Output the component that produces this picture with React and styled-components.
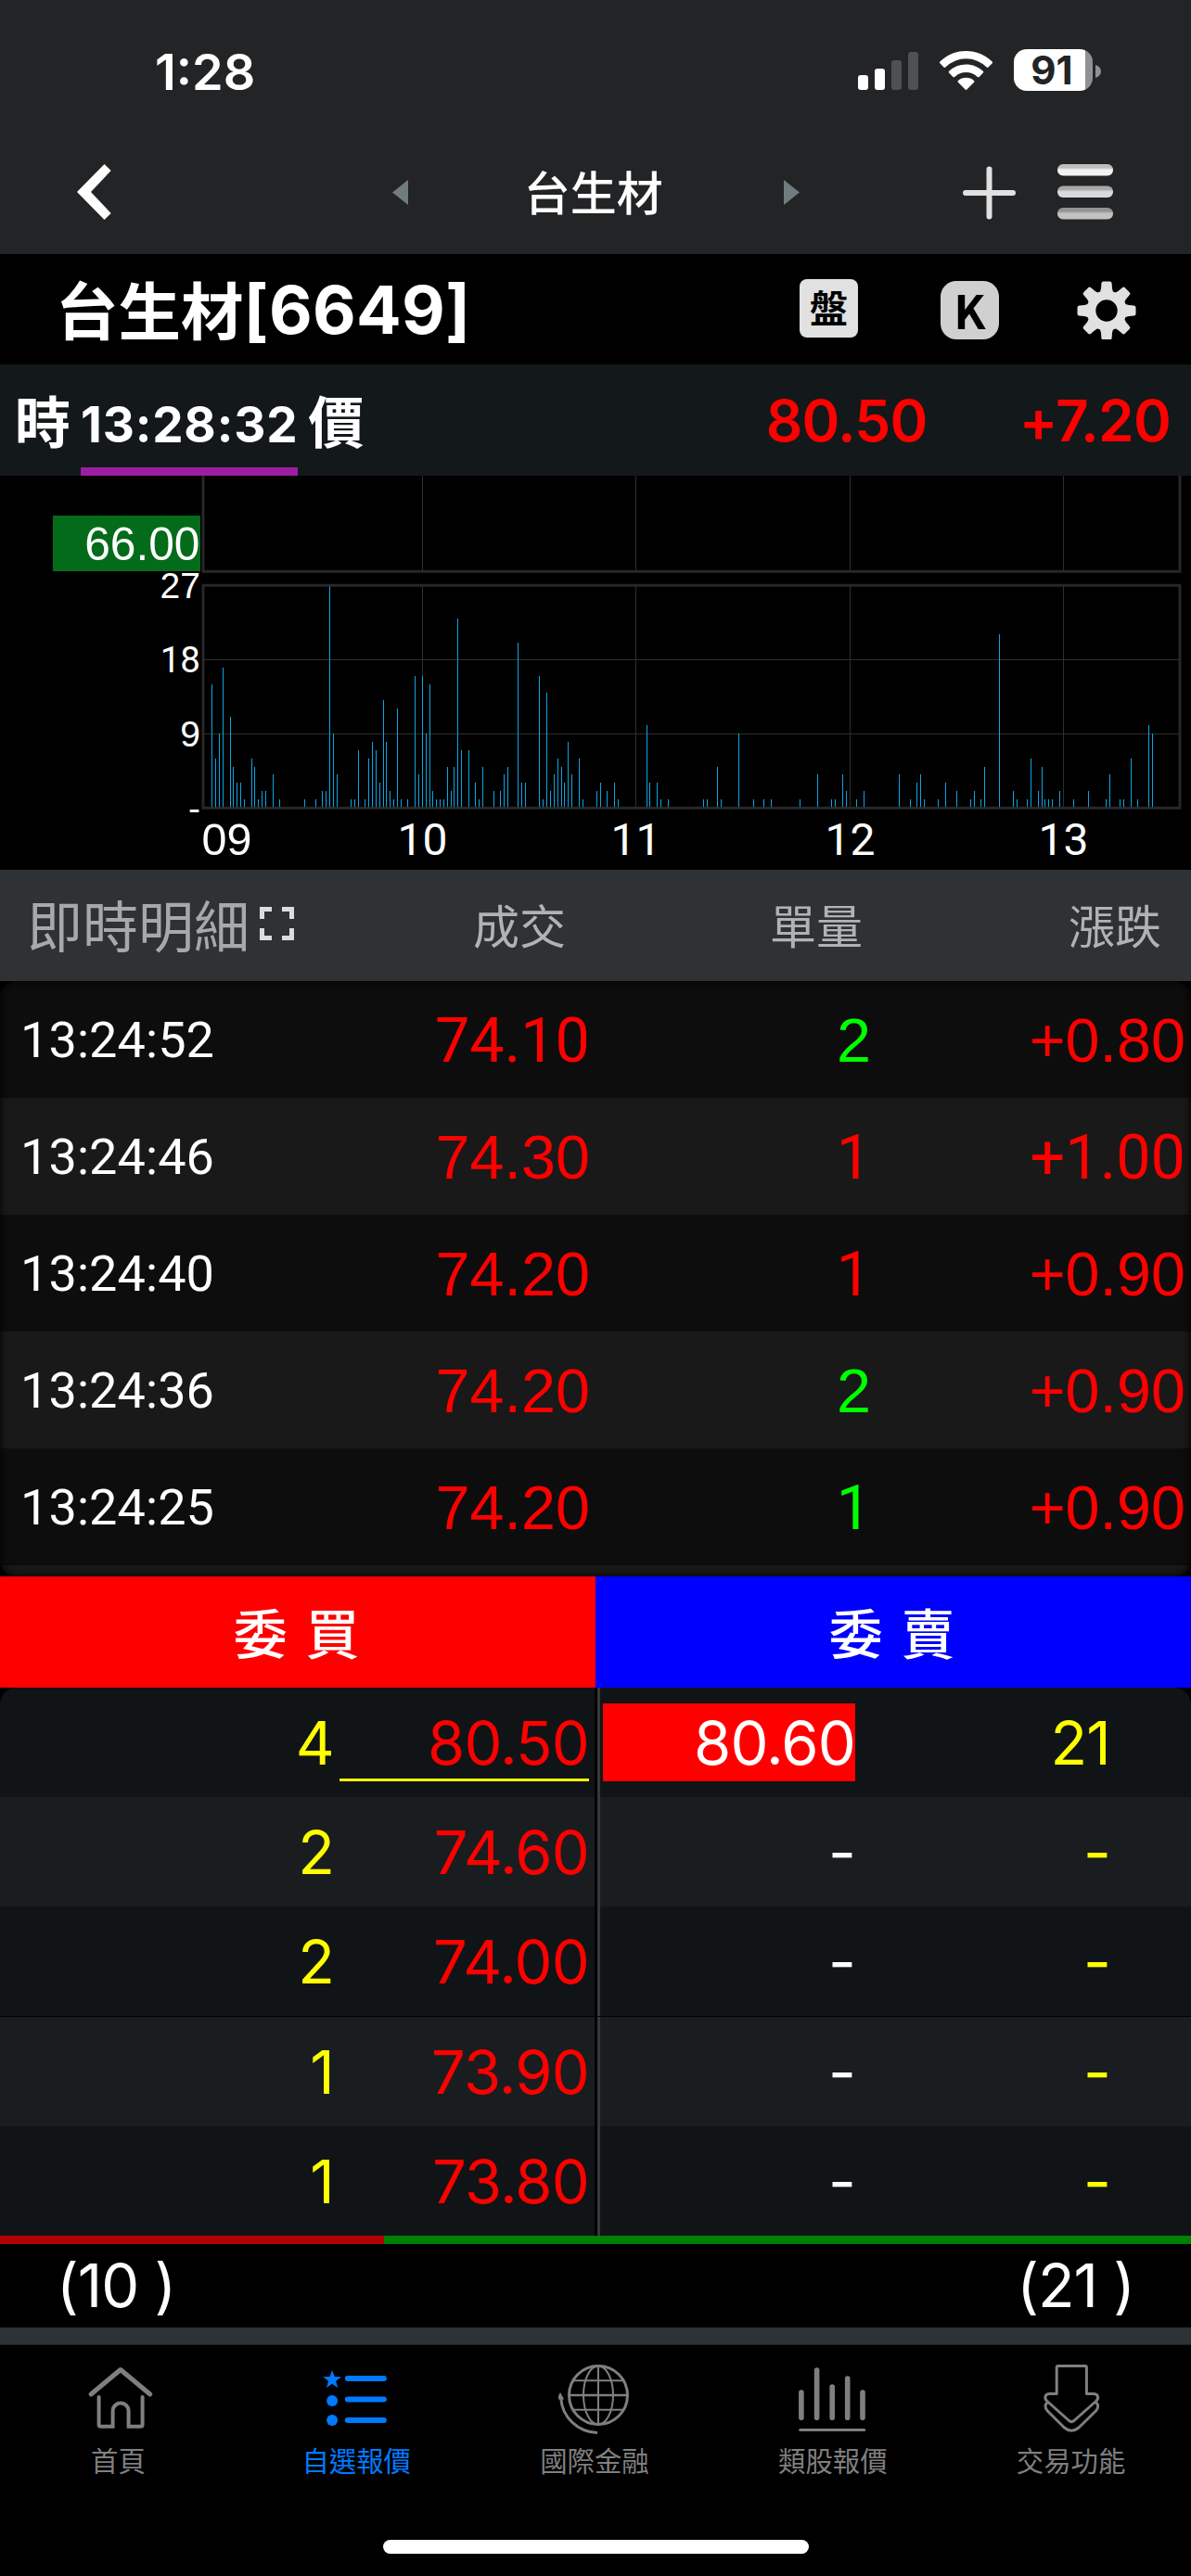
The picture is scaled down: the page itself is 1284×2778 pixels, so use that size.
import React from 'react';
import styled, { createGlobalStyle } from 'styled-components';

const CJK = '"Noto Sans CJK TC", "Noto Sans CJK SC", sans-serif';
const UI = `Inter, ${CJK}`;
const HELVETICA = '"Liberation Sans", Arial, sans-serif';
const PLAIN_ONE = 'Roboto, "Liberation Sans", sans-serif';

/* Liberation Sans puts a foot under its "1", so figures with a "1" use Roboto. */
const figureFont = (text) => (text.includes('1') ? PLAIN_ONE : HELVETICA);

const RED = '#ff0000';
const GREEN = '#00ff00';
const YELLOW = '#ffff00';
const WHITE = '#ffffff';

const GlobalStyle = createGlobalStyle`
  * { box-sizing: border-box; }
  body { margin: 0; background: #000; color: #fff; }
  svg { display: block; flex: none; }
`;

const Screen = styled.div`
  width: 1284px;
  height: 2778px;
  display: flex;
  flex-direction: column;
  background: #000;
  overflow: hidden;
  font-family: ${UI};
  white-space: nowrap;
`;

/* ---------- top bars ---------- */

const Header = styled.header`
  background: #222426;
  height: 274px;
  flex: none;
`;

const StatusBar = styled.div`
  height: 154px;
  padding: 0 97px 0 167px;
  display: flex;
  align-items: center;
`;

const Clock = styled.span`
  font-size: 54px;
  font-weight: 600;
  margin-right: auto;
`;

const Battery = styled.div`
  width: 85px;
  height: 45px;
  margin: -3px 3px 0 23px;
  padding-right: 3px;
  border-radius: 14px;
  background: linear-gradient(90deg, #fff 77px, #8f9091 77px);
  color: #222426;
  display: flex;
  align-items: center;
  justify-content: center;
  font-size: 42px;
  font-weight: 700;
  line-height: 1;
`;

const NavBar = styled.nav`
  height: 106px;
  padding: 0 84px 0 83px;
  display: flex;
  align-items: center;
`;

const NavTitle = styled.h1`
  flex: 1;
  margin: -4px 0 0;
  padding-right: 5px;
  text-align: center;
  font: 500 50px/70px ${CJK};
`;

const NavIcon = styled.svg`
  margin-left: ${(p) => p.$gap || 0}px;
`;

const TitleRow = styled.div`
  height: 119px;
  flex: none;
  padding: 0 59px 0 60px;
  display: flex;
  align-items: center;
`;

const StockName = styled.span`
  margin-top: -4px;
  font: 700 67.5px/100px ${CJK};
`;

const StockCode = styled.span`
  font-size: 72px;
  font-weight: 700;
  line-height: 100px;
  letter-spacing: 0.3px;
  margin-right: auto;
`;

const Badge = styled.span`
  width: 63px;
  height: 63px;
  margin-top: ${(p) => p.$drop}px;
  margin-right: ${(p) => p.$gap}px;
  border-radius: ${(p) => p.$radius}px;
  background: ${(p) => p.$bg};
  color: #000;
  display: flex;
  align-items: center;
  justify-content: center;
  padding-bottom: 4px;
  font: 700 ${(p) => p.$size}px/1 ${CJK};
`;

const QuoteRow = styled.div`
  height: 120px;
  flex: none;
  padding: 0 22px 0 16px;
  background: #13181a;
  display: flex;
  align-items: center;
`;

const QuoteLabel = styled.span`
  font: 700 60px/90px ${CJK};
  margin-top: -2px;
`;

const QuoteTime = styled.span`
  height: 120px;
  margin: 0 11px;
  border-bottom: 9px solid #9c1fa3;
  font-size: 53px;
  font-weight: 700;
  line-height: 131px;
  letter-spacing: 0.8px;
`;

const QuoteValue = styled.span`
  margin-left: ${(p) => p.$gap || 'auto'};
  color: ${RED};
  font-size: 62px;
  font-weight: 600;
  letter-spacing: -0.8px;
`;

/* ---------- chart ---------- */

const ChartSvg = styled.svg`
  width: 1284px;
  height: 425px;
  fill: #fff;
`;

const ChartText = styled.text`
  font-family: ${(p) => figureFont(p.children)};
  font-size: ${(p) => p.$size}px;
  text-anchor: ${(p) => p.$anchor || 'end'};
`;

/* ---------- ticks ---------- */

const TickHead = styled.div`
  height: 120px;
  flex: none;
  display: grid;
  align-items: center;
  grid-template-columns: 581px 320px 322px;
  padding: 0 32px 4px 29px;
  background: #2e3235;
  color: #b2b2b2;
  font: 400 50px/80px ${CJK};
  text-align: right;
`;

const TickHeading = styled.div`
  display: flex;
  align-items: center;
  gap: 11px;
  color: #a8a8a8;
  font-size: 60px;
`;

const HeadLead = styled.div`
  display: flex;
  align-items: center;
  justify-content: space-between;
`;

const TickList = styled.div`
  position: relative;
  height: 642px;
  flex: none;
  overflow: hidden;
  border-radius: 18px;
  &::after {
    content: '';
    position: absolute;
    inset: 0;
    border-radius: 18px;
    box-shadow: inset 0 0 10px #000;
  }
`;

const TickRow = styled.div`
  height: 126px;
  display: grid;
  align-items: center;
  grid-template-columns: 328px 286px 303px 339px;
  padding: 1px 6px 0 22px;
  background: ${(p) => (p.$alt ? '#191919' : '#0d0d0d')};
`;

const TickTime = styled.span`
  font-family: ${PLAIN_ONE};
  font-size: 54px;
  letter-spacing: 0.1px;
`;

const TickValue = styled.span`
  color: ${(p) => p.$color};
  font-family: ${(p) => figureFont(p.children)};
  font-size: 66.5px;
  text-align: right;
`;

/* ---------- order book ---------- */

const Sides = styled.div`
  height: 120px;
  flex: none;
  display: grid;
  grid-template-columns: 1fr 1fr;
`;

const Side = styled.div`
  padding-right: 3px;
  background: ${(p) => p.$bg};
  text-align: center;
  font: 500 58px/118px ${CJK};
  word-spacing: 7px;
`;

const Book = styled.div`
  flex: none;
  overflow: hidden;
  border-radius: 18px 18px 0 0;
`;

const BookRow = styled.div`
  display: flex;
  height: ${(p) => (p.$ruled ? 119 : 118)}px;
  border-top: ${(p) => (p.$ruled ? '1px solid #000' : 'none')};
  background: ${(p) => (p.$alt ? '#191d1f' : '#111416')};
`;

const BookSide = styled.div`
  display: flex;
  align-items: center;
  justify-content: ${(p) => (p.$buy ? 'flex-end' : 'flex-start')};
  gap: ${(p) => (p.$buy ? 6 : 0)}px;
  width: ${(p) => (p.$buy ? 641 : 637)}px;
  padding: ${(p) => (p.$buy ? '0 6px 0 0' : '0 0 0 3px')};
`;

const BookDivider = styled.i`
  width: 6px;
  background: linear-gradient(90deg, #000 3px, #383838 3px);
`;

const BookCell = styled.span`
  width: ${(p) => p.$w}px;
  height: 84px;
  line-height: 86px;
  text-align: right;
  color: ${(p) => p.$color};
  background: ${(p) => p.$bg || 'transparent'};
  box-shadow: ${(p) => (p.$last ? `inset 0 -3px ${YELLOW}` : 'none')};
  font-size: 65px;
  font-weight: 400;
  letter-spacing: -0.8px;
`;

const RatioBar = styled.div`
  height: 9px;
  flex: none;
  display: grid;
  grid-template-columns: 414px 1fr;
`;

const RatioPart = styled.i`
  background: ${(p) => p.$bg};
`;

const Totals = styled.div`
  height: 90px;
  flex: none;
  padding: 0 61px 2px;
  display: flex;
  align-items: center;
  justify-content: space-between;
  font-size: 65px;
  font-weight: 400;
  letter-spacing: -1px;
`;

const Strip = styled.div`
  height: 19px;
  flex: none;
  background: #2e3235;
  border-bottom: 1px solid #202426;
`;

/* ---------- tab bar ---------- */

const TabBar = styled.nav`
  padding-top: 17px;
  height: 210px;
  flex: none;
  display: grid;
  grid-template-columns: repeat(5, 1fr);
`;

const Tab = styled.div`
  display: flex;
  flex-direction: column;
  align-items: center;
  gap: 11px;
  color: ${(p) => (p.$active ? '#007aff' : '#7f7f7f')};
`;

const TabLabel = styled.span`
  padding-right: 2px;
  font: 400 29.4px/30px ${CJK};
`;

const HomeIndicator = styled.div`
  width: 459px;
  height: 15px;
  flex: none;
  margin: 0 auto;
  border-radius: 8px;
  background: #fff;
`;

/* ---------- data ---------- */

/* [minutes after 09:01, lots] */
const VOLUMES = [
  [0, 15], [1, 6], [2, 9], [3, 17], [5, 11], [6, 5], [7, 3], [8, 3], [9, 1], [11, 6], [12, 5], [13, 1], [14, 2], [15, 2],
  [17, 4], [19, 1], [26, 1], [29, 1], [31, 2], [32, 2], [33, 27], [34, 9], [35, 4], [39, 1], [40, 1], [41, 7], [43, 1],
  [44, 6], [45, 8], [46, 7], [47, 3], [48, 13], [49, 8], [50, 2], [51, 1], [52, 12], [53, 1], [55, 1], [57, 16], [58, 4],
  [59, 16], [60, 9], [61, 15], [62, 2], [63, 1], [64, 1], [65, 1], [66, 5], [67, 2], [68, 5], [69, 23], [70, 7], [72, 7],
  [74, 3], [75, 1], [76, 5], [79, 2], [81, 2], [82, 4], [83, 5], [86, 20], [87, 3], [88, 3], [92, 16], [93, 1], [94, 14],
  [95, 2], [96, 4], [97, 6], [98, 5], [99, 3], [100, 8], [101, 4], [103, 6], [104, 1], [108, 2], [109, 3], [111, 2],
  [113, 3], [114, 1], [122, 10], [123, 3], [125, 3], [126, 1], [128, 1], [138, 1], [139, 1], [142, 5], [143, 1],
  [148, 9], [152, 1], [155, 1], [157, 1], [165, 1], [170, 4], [174, 1], [175, 1], [177, 4], [178, 2], [181, 1], [183, 2],
  [193, 4], [196, 1], [198, 3], [199, 4], [200, 1], [204, 1], [206, 3], [209, 2], [213, 1], [214, 2], [216, 1], [217, 5],
  [221, 21], [225, 2], [226, 1], [229, 1], [230, 6], [232, 2], [233, 5], [234, 1], [235, 1], [236, 1], [238, 2],
  [242, 1], [246, 2], [251, 1], [252, 4], [255, 1], [256, 1], [258, 6], [260, 1], [263, 10], [264, 9],
];

const HOURS = [
  { label: '10', x: 455 },
  { label: '11', x: 685 },
  { label: '12', x: 916 },
  { label: '13', x: 1146 },
];

const TICKS = [
  { time: '13:24:52', price: '74.10', lots: '2', color: GREEN, change: '+0.80' },
  { time: '13:24:46', price: '74.30', lots: '1', color: RED, change: '+1.00' },
  { time: '13:24:40', price: '74.20', lots: '1', color: RED, change: '+0.90' },
  { time: '13:24:36', price: '74.20', lots: '2', color: GREEN, change: '+0.90' },
  { time: '13:24:25', price: '74.20', lots: '1', color: GREEN, change: '+0.90' },
];

const BOOK = [
  { bidLots: '4', bid: '80.50', ask: '80.60', askLots: '21' },
  { bidLots: '2', bid: '74.60', ask: '-', askLots: '-' },
  { bidLots: '2', bid: '74.00', ask: '-', askLots: '-' },
  { bidLots: '1', bid: '73.90', ask: '-', askLots: '-' },
  { bidLots: '1', bid: '73.80', ask: '-', askLots: '-' },
];

/* ---------- icons ---------- */

const Signal = () => (
  <svg width="65" height="45" viewBox="925 54 65 45">
    <g fill="#fff">
      <rect x="925" y="80" width="11" height="16" rx="3" />
      <rect x="943" y="73" width="11" height="23" rx="3" />
    </g>
    <g fill="#4f5052">
      <rect x="961" y="64" width="11" height="32" rx="3" />
      <rect x="979" y="55" width="11" height="41" rx="3" />
    </g>
  </svg>
);

const Wifi = () => (
  <NavIcon $gap={23} width="57" height="45" viewBox="1013 54 57 45" fill="#fff">
    <path d="M1041.5 54c11 0 21 4.300 28.200 11.500q.8.8 0 1.700l-4.200 4.300q-.9.9-1.800 0a31.500 31.500 0 0 0-44.400 0q-.9.9-1.800 0l-4.200-4.300q-.8-.9 0-1.700A40 40 0 0 1 1041.500 54z" />
    <path d="M1041.5 68.500c7 0 13.500 2.700 18.400 7.300q.9.900 0 1.800l-4.300 4.300q-.9.900-1.800 0a17.800 17.800 0 0 0-24.600 0q-.9.900-1.800 0l-4.300-4.300q-.9-.9 0-1.800a26.600 26.600 0 0 1 18.400-7.300z" />
    <path d="M1041.500 82.800c3.300 0 6.300 1.200 8.600 3.200q.9.900 0 1.800l-7.700 7.800q-.9.900-1.800 0l-7.700-7.800q-.9-.9 0-1.800a13 13 0 0 1 8.600-3.200z" />
  </NavIcon>
);

const Gear = () => (
  <svg width="64" height="64" viewBox="-32 -33 64 64" fill="#e1e1e1">
    <circle r="16.600" fill="none" stroke="#e1e1e1" strokeWidth="9.800" />
    {[0, 45, 90, 135, 180, 225, 270, 315].map((a) => (
      <path key={a} transform={`rotate(${a})`} d="M-8.500 -18.500Q-6.200 -21 -6 -24L-5.600 -29.500Q-5.400 -31.500 -3.500 -31.500H3.500Q5.400 -31.500 5.600 -29.500L6 -24Q6.200 -21 8.500 -18.500z" />
    ))}
  </svg>
);

const TAB_ICONS = {
  home: (
    <g fill="none" stroke="currentColor" strokeLinecap="round" strokeLinejoin="round">
      <path strokeWidth="5" d="M98.500 2582L130.300 2555.500L162.200 2582" />
      <path strokeWidth="4" strokeLinejoin="miter" d="M107 2585V2615q0 1.700 2 1.700H122V2600a8.500 8.500 0 0 1 17 0V2616.700H152q2 0 2-1.700V2585" />
    </g>
  ),
  list: (
    <g fill="currentColor">
      <path d="M358.300 2556l2.500 7.100 7.500.2-6 4.500 2.200 7.200-6.200-4.300-6.200 4.300 2.200-7.200-6-4.500 7.500-.2z" />
      <circle cx="358.300" cy="2589" r="6" />
      <circle cx="358.300" cy="2610" r="6" />
      <rect x="372" y="2562" width="45" height="6" rx="3" />
      <rect x="372" y="2584.500" width="45" height="6" rx="3" />
      <rect x="372" y="2607" width="45" height="6" rx="3" />
    </g>
  ),
  globe: (
    <g fill="none" stroke="currentColor" strokeWidth="2">
      <circle cx="645" cy="2583" r="31.500" strokeWidth="3" />
      <ellipse cx="645" cy="2583" rx="16" ry="31.500" />
      <path d="M645 2551.500V2614.500M617.500 2567.300H672.500M617.500 2598.700H672.500" />
      <path d="M613.500 2583H676.500" strokeWidth="2.600" />
      <path d="M604.700 2586A40 40 0 0 0 644 2623.500" strokeWidth="3" />
      <path d="M604 2580L608.200 2587.500H600z" fill="currentColor" stroke="none" />
    </g>
  ),
  bars: (
    <g stroke="currentColor" strokeWidth="5.600" strokeLinecap="round">
      <path d="M863.700 2580V2607.200M880.400 2556V2607.200M897 2574V2607.200M913.500 2565V2607.200M929.800 2580V2607.200" />
      <path d="M862.500 2620.500H931.500" strokeWidth="3" />
    </g>
  ),
  trade: (
    <g fill="none" stroke="currentColor" strokeWidth="3" strokeLinejoin="round">
      <path d="M1138.800 2581.500V2553q0-1.500 1.500-1.500H1169.500q1.500 0 1.500 1.500V2581.500H1178.500c5 0 6 4.500 3.200 7.500L1157.500 2610.500q-2.700 2.200-5.400 0L1128 2589c-2.800-3-1.800-7.500 3.200-7.500z" />
      <path d="M1129.500 2590.500c-3.600 2-3.800 6-.6 9.500L1147 2618q7.800 6.500 15.600 0L1181 2600c3.200-3.500 3-7.500-.6-9.500" />
    </g>
  ),
};

const TABS = [
  { id: 'home', label: '首頁', cx: 128.4 },
  { id: 'list', label: '自選報價', cx: 385.2, active: true },
  { id: 'globe', label: '國際金融', cx: 642 },
  { id: 'bars', label: '類股報價', cx: 898.8 },
  { id: 'trade', label: '交易功能', cx: 1155.6 },
];

const MENU_BARS = [
  { y: 177, top: '#bdbdbd', bottom: '#f2f2f2' },
  { y: 200.5, top: '#a8a8a8', bottom: '#dadada' },
  { y: 224, top: '#939393', bottom: '#c2c2c2' },
];

/* ---------- chart ---------- */

function Chart() {
  return (
    <ChartSvg viewBox="0 513 1284 425">
      <g fill="#2e2e2e" shapeRendering="crispEdges">
        {HOURS.map((h) => (
          <React.Fragment key={h.label}>
            <rect x={h.x} y="513" width="1" height="103" />
            <rect x={h.x} y="632" width="1" height="239" />
          </React.Fragment>
        ))}
        <rect x="219" y="711" width="1053" height="1" />
        <rect x="219" y="791" width="1053" height="1" />
      </g>
      <g fill="#0aa5e2" shapeRendering="crispEdges">
        {VOLUMES.map(([m, v]) => {
          const y = Math.round(871 - 8.889 * v);
          return <rect key={m} x={Math.floor(228.9 + 3.838 * m)} y={y} width="1" height={872 - y} />;
        })}
      </g>
      <g fill="none" stroke="#2e2e2e" strokeOpacity="0.85" strokeWidth="3">
        <path d="M219 505V616.300H1272V505" />
        <rect x="219" y="631.300" width="1053" height="240" />
      </g>
      <rect x="57" y="556" width="159" height="60" fill="#046b1b" />
      <ChartText x="215.500" y="603.500" $size={49.7}>66.00</ChartText>
      <ChartText x="216" y="645" $size={39}>27</ChartText>
      <ChartText x="216" y="725" $size={38.5}>18</ChartText>
      <ChartText x="216" y="804.500" $size={39}>9</ChartText>
      <ChartText x="216" y="885" $size={39}>-</ChartText>
      <ChartText x="217.500" y="922" $size={48.5} $anchor="start">09</ChartText>
      {HOURS.map((h) => (
        <ChartText key={h.label} x={h.x + 0.5} y="922" $size={48} $anchor="middle">{h.label}</ChartText>
      ))}
    </ChartSvg>
  );
}

export default function App() {
  return (
    <Screen>
      <GlobalStyle />
      <Header>
        <StatusBar>
          <Clock>1:28</Clock>
          <Signal />
          <Wifi />
          <Battery>91</Battery>
          <svg width="6" height="14" viewBox="0 0 6 14">
            <path d="M0 0Q6 2 6 7T0 14z" fill="#8f9091" />
          </svg>
        </StatusBar>
        <NavBar>
          <NavIcon width="37" height="60" viewBox="83 177 37 60">
            <path d="M112.500 177L119.700 184L98 207L119.700 230L112.500 237L83 207z" fill="#fff" />
          </NavIcon>
          <NavIcon $gap={302.5} width="17" height="27" viewBox="0 0 17 27">
            <path d="M17 0V27L0 13.500z" fill="#727b80" />
          </NavIcon>
          <NavTitle>台生材</NavTitle>
          <NavIcon width="17" height="27" viewBox="0 0 17 27">
            <path d="M0 0V27L17 13.500z" fill="#727b80" />
          </NavIcon>
          <NavIcon $gap={176} width="57" height="60" viewBox="1038 177 57 60">
            <path d="M1041 208H1092M1066.500 182.500V233.500" stroke="#e0e0e0" strokeWidth="6" strokeLinecap="round" />
          </NavIcon>
          <NavIcon $gap={45} width="60" height="60" viewBox="1140 177 60 60">
            <defs>
              {MENU_BARS.map((b, i) => (
                <linearGradient key={b.y} id={`menu${i}`} x2="0" y2="1">
                  <stop offset="0.3" stopColor={b.top} />
                  <stop offset="0.5" stopColor={b.bottom} />
                </linearGradient>
              ))}
            </defs>
            {MENU_BARS.map((b, i) => (
              <rect key={b.y} x="1140" y={b.y} width="60" height="12.500" rx="6" fill={`url(#menu${i})`} />
            ))}
          </NavIcon>
        </NavBar>
      </Header>

      <TitleRow>
        <StockName>台生材</StockName>
        <StockCode>[6649]</StockCode>
        <Badge $bg="#e1e1e1" $radius={8} $size={41} $drop={-2} $gap={89}>盤</Badge>
        <Badge $bg="#d0d0d0" $radius={17} $size={50} $drop={2} $gap={84}>K</Badge>
        <Gear />
      </TitleRow>

      <QuoteRow>
        <QuoteLabel>時</QuoteLabel>
        <QuoteTime>13:28:32</QuoteTime>
        <QuoteLabel>價</QuoteLabel>
        <QuoteValue>80.50</QuoteValue>
        <QuoteValue $gap="99px">+7.20</QuoteValue>
      </QuoteRow>

      <Chart />

      <TickHead>
        <HeadLead>
          <TickHeading>
            即時明細
            <svg width="37" height="36" viewBox="0 0 37 36">
              <path d="M2.500 13V2.500H13M24 2.500H34.500V13M34.500 23V33.500H24M13 33.500H2.500V23" fill="none" stroke="#dcdcdc" strokeWidth="5" />
            </svg>
          </TickHeading>
          <span>成交</span>
        </HeadLead>
        <span>單量</span>
        <span>漲跌</span>
      </TickHead>

      <TickList>
        {TICKS.map((t, i) => (
          <TickRow key={t.time} $alt={i % 2 === 1}>
            <TickTime>{t.time}</TickTime>
            <TickValue $color={RED}>{t.price}</TickValue>
            <TickValue $color={t.color}>{t.lots}</TickValue>
            <TickValue $color={RED}>{t.change}</TickValue>
          </TickRow>
        ))}
        <TickRow $alt />
      </TickList>

      <Sides>
        <Side $bg={RED}>委 買</Side>
        <Side $bg="#0000ff">委 賣</Side>
      </Sides>

      <Book>
        {BOOK.map((b, i) => (
          <BookRow key={b.bid} $alt={i % 2 === 1} $ruled={i === 3}>
            <BookSide $buy>
              <BookCell $w={200} $color={YELLOW}>{b.bidLots}</BookCell>
              <BookCell $w={269} $color={RED} $last={i === 0}>{b.bid}</BookCell>
            </BookSide>
            <BookDivider />
            <BookSide>
              <BookCell $w={272} $color={WHITE} $bg={i === 0 ? RED : undefined}>{b.ask}</BookCell>
              <BookCell $w={275} $color={YELLOW}>{b.askLots}</BookCell>
            </BookSide>
          </BookRow>
        ))}
      </Book>

      <RatioBar>
        <RatioPart $bg="#b00000" />
        <RatioPart $bg="#008000" />
      </RatioBar>
      <Totals>
        <span>(10 )</span>
        <span>(21 )</span>
      </Totals>
      <Strip />

      <TabBar>
        {TABS.map((t) => (
          <Tab key={t.id} $active={t.active}>
            <svg width="80" height="80" viewBox={`${t.cx - 40} 2546 80 80`}>{TAB_ICONS[t.id]}</svg>
            <TabLabel>{t.label}</TabLabel>
          </Tab>
        ))}
      </TabBar>
      <HomeIndicator />
    </Screen>
  );
}
